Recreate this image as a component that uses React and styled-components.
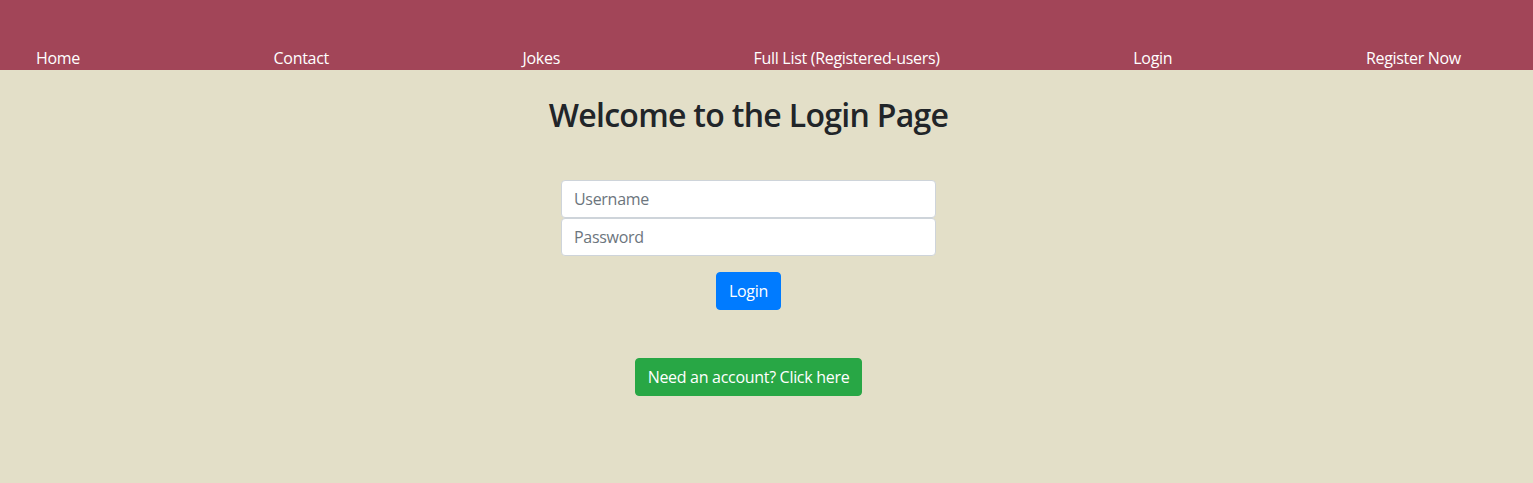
import React from "react";
import styled, { createGlobalStyle } from "styled-components";

const GlobalStyle = createGlobalStyle`
  html, body {
    margin: 0;
    padding: 0;
    background-color: #e3dfc8;
    font-family: "Open Sans", "Noto Sans", sans-serif;
    font-size: 16px;
    letter-spacing: -0.3px;
    color: #212529;
  }
`;

const links = ["Home", "Contact", "Jokes", "Full List (Registered-users)", "Login", "Register Now"];

export default function App() {
  return (
    <Page>
      <GlobalStyle />
      <NavBar>
        {links.map((l) => (
          <NavLink key={l} href="#">
            {l}
          </NavLink>
        ))}
      </NavBar>
      <Main>
        <Title>Welcome to the Login Page</Title>
        <Form onSubmit={(e) => e.preventDefault()}>
          <Input type="text" placeholder="Username" />
          <Input type="password" placeholder="Password" />
          <Button color="#007bff">Login</Button>
        </Form>
        <Button color="#28a745">Need an account? Click here</Button>
      </Main>
    </Page>
  );
}

const Page = styled.div`
  min-height: 483px;
`;

const NavBar = styled.nav`
  display: flex;
  justify-content: space-between;
  align-items: flex-end;
  height: 70px;
  box-sizing: border-box;
  padding: 0 72px 0 36px;
  background-color: #a24558;
`;

const NavLink = styled.a`
  color: #fff;
  text-decoration: none;
  font-size: 16px;
  line-height: 24px;
`;

const Main = styled.main`
  display: flex;
  flex-direction: column;
  align-items: center;
  padding: 26px 36px 0 0;
`;

const Title = styled.h1`
  margin: 0 0 46px;
  font-size: 32px;
  font-weight: 600;
  line-height: 1.2;
  letter-spacing: -0.7px;
  color: #212529;
`;

const Form = styled.form`
  display: flex;
  flex-direction: column;
  align-items: center;
  width: 375px;
  margin-bottom: 48px;
`;

const Input = styled.input`
  box-sizing: border-box;
  width: 100%;
  height: 38px;
  padding: 6px 12px;
  font-family: inherit;
  font-size: 16px;
  letter-spacing: inherit;
  color: #495057;
  background: #fff;
  border: 1px solid #ced4da;
  border-radius: 4px;
  outline: none;
  &::placeholder {
    color: #6c757d;
  }
`;

const Button = styled.button`
  box-sizing: border-box;
  height: 38px;
  padding: 6px 12px;
  margin-top: ${(p) => (p.color === "#007bff" ? "16px" : "0")};
  font-family: inherit;
  font-size: 16px;
  letter-spacing: inherit;
  line-height: 24px;
  color: #fff;
  background-color: ${(p) => p.color};
  border: 1px solid ${(p) => p.color};
  border-radius: 4px;
  cursor: pointer;
`;
